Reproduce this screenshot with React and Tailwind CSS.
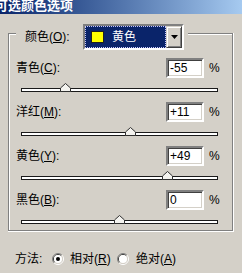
import React from "react";

// one channel row: label, numeric box, slider
const rows = [
  { name: "青色", key: "C", value: "-55", num: -55 },
  { name: "洋红", key: "M", value: "+11", num: 11 },
  { name: "黄色", key: "Y", value: "+49", num: 49 },
  { name: "黑色", key: "B", value: "0", num: 0 },
];

const Radio = ({ checked }) => (
  <svg width="12" height="12" viewBox="0 0 12 12" className="shrink-0">
    <path d="M2.1 9.9 A5.5 5.5 0 0 1 9.9 2.1" fill="none" stroke="#808080" />
    <path d="M9.9 2.1 A5.5 5.5 0 0 1 2.1 9.9" fill="none" stroke="#ffffff" />
    <path d="M2.8 9.2 A4.5 4.5 0 0 1 9.2 2.8" fill="none" stroke="#404040" />
    <path d="M9.2 2.8 A4.5 4.5 0 0 1 2.8 9.2" fill="none" stroke="#d4d0c8" />
    <circle cx="6" cy="6" r="4" fill="#ffffff" />
    {checked && <circle cx="6" cy="6" r="2" fill="#000000" />}
  </svg>
);

const Thumb = () => (
  <svg width="11" height="9" viewBox="0 0 11 9">
    <polygon points="5.5,0.5 10.5,5 10.5,8.5 0.5,8.5 0.5,5" fill="#f4f3ef" stroke="#303030" />
  </svg>
);

const ChannelRow = ({ row }) => {
  const pct = ((row.num + 100) / 200) * 100;
  return (
    <div className="flex flex-col">
      <div className="flex items-center h-[20px] pl-[6px] pr-[14px]">
        <span className="flex-1 leading-none">
          {row.name}(<span className="underline">{row.key}</span>):
        </span>
        <div className="w-[38px] h-[20px] border-2 border-t-[#808080] border-l-[#808080] border-b-white border-r-white shadow-[inset_1px_1px_0_#404040,inset_-1px_-1px_0_#d4d0c8] bg-white flex items-center pl-[2px] leading-none">
          {row.value}
        </div>
        <span className="ml-[5px] w-[9px] leading-none">%</span>
      </div>
      <div className="h-[20px] pl-[11px] pr-[14px]">
        <div className="relative mt-[10px] h-[4px] border border-[#1a1a1a] bg-white">
          <div className="absolute top-[-6px] -ml-[5.5px]" style={{ left: pct + "%" }}>
            <Thumb />
          </div>
        </div>
      </div>
    </div>
  );
};

export default function App() {
  return (
    <div className="w-[242px] h-[273px] bg-[#d4d0c8] overflow-hidden text-[12px] text-black font-['Liberation_Sans','Noto_Sans_CJK_SC',sans-serif]">
      <div className="h-[14px] bg-gradient-to-r from-[#0a246a] to-[#a6caf0] overflow-hidden">
        <div className="-ml-[5px] -mt-[2px] text-white font-bold text-[13px] leading-[15px] whitespace-nowrap">
          可选颜色选项
        </div>
      </div>

      <div className="pt-[10px]">
        <div className="relative z-10 ml-[16px] inline-flex items-center h-[26px] bg-[#d4d0c8] pl-[9px] pr-[4px]">
          <span className="w-[58px] leading-none">
            颜色(<span className="underline">O</span>):
          </span>
          <div className="w-[101px] h-[26px] border-2 border-t-[#808080] border-l-[#808080] border-b-white border-r-white shadow-[inset_1px_1px_0_#404040,inset_-1px_-1px_0_#d4d0c8] flex">
            <div className="flex-1 bg-[#0a246a] border border-dotted border-[#c8c8ff] flex items-center pl-[5px]">
              <div className="w-[13px] h-[12px] bg-[#ffff00] border border-[#202020]" />
              <span className="ml-[8px] text-white leading-none">黄色</span>
            </div>
            <div className="w-[16px] bg-[#d4d0c8] border border-t-[#d4d0c8] border-l-[#d4d0c8] border-b-[#404040] border-r-[#404040] shadow-[inset_1px_1px_0_#ffffff,inset_-1px_-1px_0_#808080] flex items-center justify-center">
              <svg width="7" height="4" viewBox="0 0 7 4">
                <polygon points="0,0 7,0 3.5,4" fill="#000000" />
              </svg>
            </div>
          </div>
        </div>

        <div className="-mt-[17px] ml-[8px] w-[226px] border-r border-b border-white">
          <div className="border border-[#808080]">
            <div className="border-l border-t border-white pt-[23px] flex flex-col gap-[4px]">
              {rows.map((r) => (
                <ChannelRow key={r.key} row={r} />
              ))}
            </div>
          </div>
        </div>

        <div className="mt-[19px] h-[16px] flex items-center pl-[15px]">
          <span className="w-[37px] leading-none">方法:</span>
          <Radio checked />
          <span className="ml-[6px] w-[47px] leading-none">
            相对(<span className="underline">R</span>)
          </span>
          <Radio />
          <span className="ml-[7px] leading-none">
            绝对(<span className="underline">A</span>)
          </span>
        </div>
      </div>
    </div>
  );
}
